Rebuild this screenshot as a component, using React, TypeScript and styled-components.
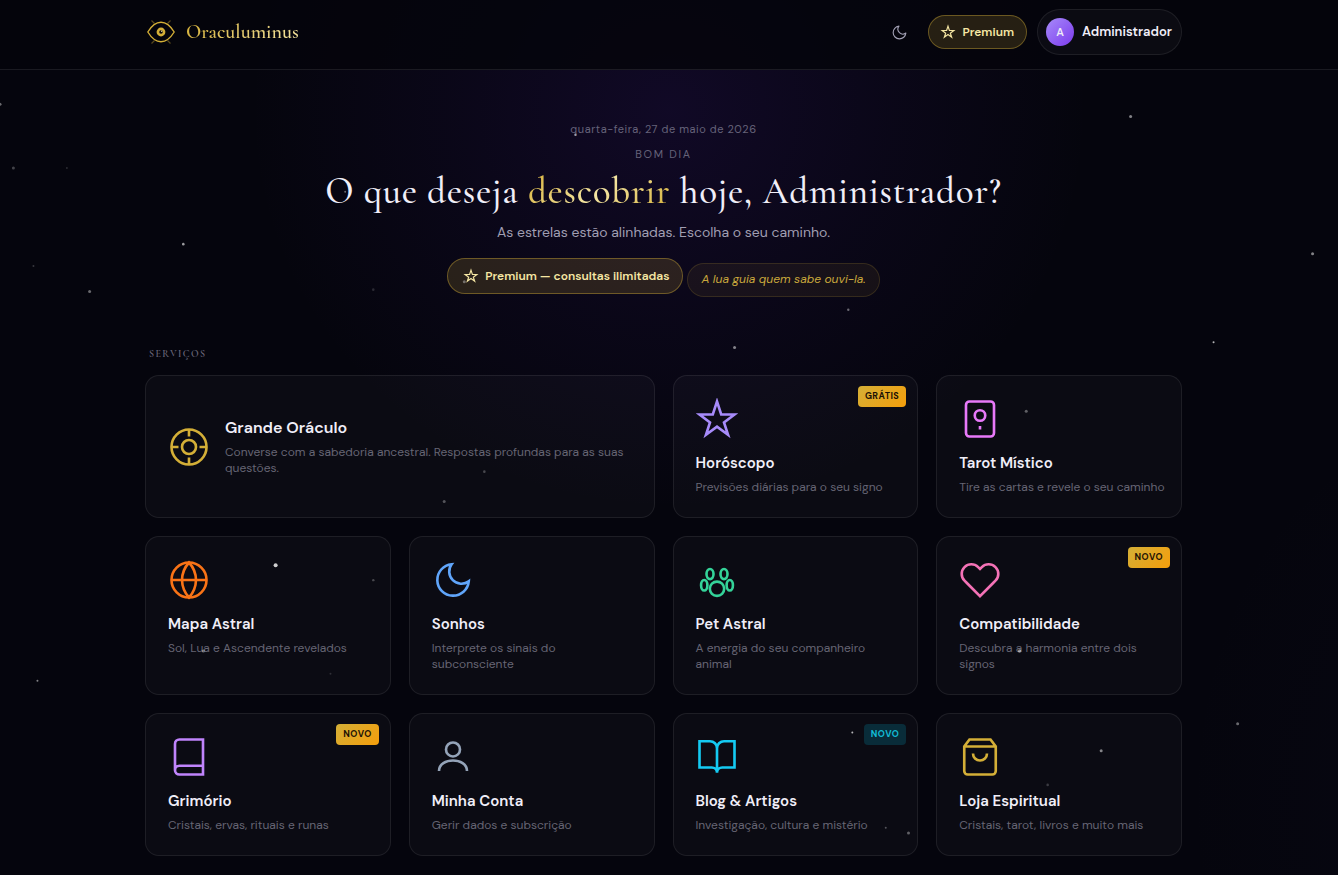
import React from "react";
import styled, { createGlobalStyle, css } from "styled-components";

const SANS = `"DM Sans", "Liberation Sans", Arial, sans-serif`;
const SERIF = `"Cormorant Garamond", "Liberation Serif", "Times New Roman", serif`;

const GlobalStyle = createGlobalStyle`
  *, *::before, *::after { box-sizing: border-box; }
  body {
    margin: 0;
    background: #05050d;
    color: #f0eef8;
    font-family: ${SANS};
    font-size: 12px;
    line-height: 16px;
  }
  h1, h2, h3, p { margin: 0; }
  a { color: inherit; text-decoration: none; }
  button { font: inherit; color: inherit; cursor: pointer; }
`;

const Page = styled.div`
  position: relative;
  min-height: 100vh;
  padding-bottom: 18px;
  background:
    radial-gradient(ellipse 420px 400px at 50% 110px, rgba(88, 34, 190, 0.14), rgba(88, 34, 190, 0.06) 55%, transparent),
    radial-gradient(ellipse 260px 380px at 108% 800px, rgba(60, 50, 130, 0.04), transparent);
`;

const StarLayer = styled.svg`
  position: fixed;
  inset: 0;
  width: 100%;
  height: 100vh;
  pointer-events: none;
  z-index: 2;
`;

const Container = styled.div`
  max-width: 1037px;
  margin: 0 auto;
`;

const Header = styled.header`
  padding: 9px 11px 14px 0;
  background: rgba(5, 5, 12, 0.86);
  border-bottom: 1px solid rgba(255, 255, 255, 0.09);
`;

const Main = styled.main`
  padding-right: 11px;
`;

const HeaderBar = styled(Container)`
  display: flex;
  align-items: center;
  justify-content: space-between;
`;

const Brand = styled.a`
  display: flex;
  align-items: center;
  gap: 9px;
`;

const BrandName = styled.span`
  font-family: ${SERIF};
  font-size: 20px;
  font-weight: 600;
  line-height: 24px;
  background: linear-gradient(135deg, #d4af37, #f5e6a3);
  background-clip: text;
  -webkit-background-clip: text;
  color: transparent;
`;

const Actions = styled.div`
  display: flex;
  align-items: center;
  gap: 10px;
`;

const ThemeButton = styled.button`
  display: grid;
  place-items: center;
  width: 38px;
  height: 38px;
  padding: 0;
  border: 0;
  border-radius: 50%;
  background: none;
  color: #a3a1b5;
`;

const premiumLook = css`
  display: inline-flex;
  align-items: center;
  gap: 7px;
  border: 1px solid rgba(212, 175, 55, 0.4);
  border-radius: 18px;
  background: rgba(212, 175, 55, 0.16);
  color: #f5e6a3;
  font-weight: 600;
`;

const PremiumLink = styled.a`
  ${premiumLook}
  height: 34px;
  padding: 0 12px;
`;

const PremiumStatus = styled.span`
  ${premiumLook}
  height: 36px;
  padding: 0 13px 0 16px;
`;

const AccountButton = styled.button`
  display: flex;
  align-items: center;
  gap: 8px;
  height: 46px;
  padding: 0 9px 0 8px;
  border: 1px solid rgba(255, 255, 255, 0.08);
  border-radius: 23px;
  background: rgba(255, 255, 255, 0.03);
  font-size: 13px;
  font-weight: 600;
`;

const Avatar = styled.span`
  display: grid;
  place-items: center;
  width: 28px;
  height: 28px;
  border-radius: 50%;
  background: linear-gradient(135deg, #a78bfa, #7c3aed);
  font-size: 11px;
`;

const Hero = styled.section`
  display: flex;
  flex-direction: column;
  align-items: center;
  padding-top: 51px;
  text-align: center;
`;

const DateLine = styled.p`
  color: #66637a;
  font-size: 11px;
  letter-spacing: 0.05em;
`;

const Greeting = styled.p`
  margin-top: 9px;
  color: #66637a;
  font-size: 11px;
  letter-spacing: 0.15em;
  text-transform: uppercase;
`;

const Headline = styled.h1`
  margin-top: 8px;
  font-family: ${SERIF};
  font-size: 37px;
  font-weight: 500;
  line-height: 44px;
  letter-spacing: 0.02em;
`;

const Accent = styled.span`
  background: linear-gradient(135deg, #d4af37, #f5e6a3 50%, #d4af37);
  background-clip: text;
  -webkit-background-clip: text;
  color: transparent;
`;

const Lead = styled.p`
  margin-top: 8px;
  color: #a09eb2;
  font-size: 14px;
  line-height: 20px;
`;

const Pills = styled.div`
  display: flex;
  flex-wrap: wrap;
  justify-content: center;
  align-items: flex-start;
  gap: 4px;
  margin-top: 16px;
`;

const Quote = styled.em`
  margin-top: 5px;
  padding: 7px 13px 9px;
  border: 1px solid rgba(212, 175, 55, 0.16);
  border-radius: 17px;
  background: rgba(212, 175, 55, 0.07);
  color: #c9a83c;
`;

const SectionLabel = styled.h2`
  margin: 49px 0 13px;
  padding-left: 4px;
  color: #6b687b;
  font-family: ${SERIF};
  font-size: 10px;
  font-weight: 600;
  line-height: 16px;
  letter-spacing: 0.14em;
  text-transform: uppercase;
`;

const Grid = styled.div`
  display: grid;
  grid-template-columns: repeat(4, minmax(0, 1fr));
  gap: 18px;

  @media (max-width: 900px) {
    grid-template-columns: repeat(2, minmax(0, 1fr));
  }
`;

const Card = styled.a<{ $featured?: boolean }>`
  position: relative;
  display: flex;
  flex-direction: column;
  gap: 13px;
  padding: 22px 14px 22px 22px;
  border: 1px solid rgba(255, 255, 255, 0.08);
  border-radius: 14px;
  background: rgba(255, 255, 255, 0.028);
  ${({ $featured }) =>
    $featured &&
    css`
      grid-column: span 2;
      flex-direction: row;
      align-items: center;
      gap: 15px;
    `}
`;

const CardIcon = styled.svg<{ $tone: string }>`
  flex: none;
  width: 42px;
  height: 42px;
  color: ${({ $tone }) => $tone};
`;

const CardTitle = styled.h3<{ $featured?: boolean }>`
  font-size: ${({ $featured }) => ($featured ? "16px" : "15px")};
  font-weight: 600;
  line-height: 20px;
`;

const CardText = styled.p`
  margin-top: 6px;
  color: #666573;
  white-space: pre-line;
`;

const Badge = styled.span<{ $cool?: boolean }>`
  position: absolute;
  top: 10px;
  right: 11px;
  padding: 2px 7px 3px;
  border-radius: 4px;
  font-size: 9px;
  font-weight: 700;
  letter-spacing: 0.05em;
  text-transform: uppercase;
  background: ${({ $cool }) =>
    $cool ? "rgba(6, 182, 212, 0.2)" : "linear-gradient(135deg, #d4af37, #f59e0b)"};
  color: ${({ $cool }) => ($cool ? "#12bdd6" : "#1a1005")};
`;

const STAR_PATH = "M12 2l2.4 7.4H22l-6 4.6 2.3 7-6.3-4.6L5.7 21 8 14 2 9.4h7.6z";
const MOON_PATH = "M21 12.79A9 9 0 1 1 11.21 3 7 7 0 0 0 21 12.79z";

const icons: Record<string, React.ReactNode> = {
  oracle: (
    <>
      <circle cx="12" cy="12" r="10" />
      <circle cx="12" cy="12" r="4" />
      <path d="M12 2v4M12 18v4M2 12h4M18 12h4" />
    </>
  ),
  star: <path d={STAR_PATH} />,
  tarot: (
    <>
      <rect x="4" y="2" width="16" height="20" rx="2" />
      <circle cx="12" cy="10" r="3" />
      <path d="M12 16v2" />
    </>
  ),
  globe: (
    <>
      <circle cx="12" cy="12" r="10" />
      <path d="M2 12h20M12 2a15.3 15.3 0 0 1 4 10 15.3 15.3 0 0 1-4 10 15.3 15.3 0 0 1-4-10 15.3 15.3 0 0 1 4-10z" />
    </>
  ),
  moon: <path d={MOON_PATH} />,
  paw: (
    <>
      <ellipse cx="8" cy="8.6" rx="2" ry="2.9" />
      <ellipse cx="16" cy="8.6" rx="2" ry="2.9" />
      <ellipse cx="4.7" cy="15" rx="1.8" ry="3" />
      <ellipse cx="19.3" cy="15" rx="1.8" ry="3" />
      <circle cx="12" cy="17" r="4.1" />
    </>
  ),
  heart: (
    <path d="M20.84 4.61a5.5 5.5 0 0 0-7.78 0L12 5.67l-1.06-1.06a5.5 5.5 0 0 0-7.78 7.78l1.06 1.06L12 21.23l7.78-7.78 1.06-1.06a5.5 5.5 0 0 0 0-7.78z" />
  ),
  book: (
    <path d="M4 19.5A2.5 2.5 0 0 1 6.5 17H20M6.5 2H20v20H6.5A2.5 2.5 0 0 1 4 19.5v-15A2.5 2.5 0 0 1 6.5 2z" />
  ),
  user: (
    <>
      <circle cx="12" cy="7.7" r="4" />
      <path d="M4 20c0-4 4-6 8-6s8 2 8 6" />
    </>
  ),
  openBook: (
    <path d="M2 3h6a4 4 0 0 1 4 4v14a3 3 0 0 0-3-3H2zM22 3h-6a4 4 0 0 0-4 4v14a3 3 0 0 1 3-3h7z" />
  ),
  bag: (
    <path d="M6 2L3 6v14a2 2 0 0 0 2 2h14a2 2 0 0 0 2-2V6l-3-4zM3 6h18M16 10a4 4 0 0 1-8 0" />
  ),
};

interface Service {
  title: string;
  text: string;
  icon: string;
  tone: string;
  featured?: boolean;
  badge?: string;
  coolBadge?: boolean;
}

const services: Service[] = [
  { title: "Grande Oráculo", text: "Converse com a sabedoria ancestral. Respostas profundas para as suas\nquestões.", icon: "oracle", tone: "#d4af37", featured: true },
  { title: "Horóscopo", text: "Previsões diárias para o seu signo", icon: "star", tone: "#a78bfa", badge: "Grátis" },
  { title: "Tarot Místico", text: "Tire as cartas e revele o seu caminho", icon: "tarot", tone: "#e879f9" },
  { title: "Mapa Astral", text: "Sol, Lua e Ascendente revelados", icon: "globe", tone: "#f97316" },
  { title: "Sonhos", text: "Interprete os sinais do\nsubconsciente", icon: "moon", tone: "#60a5fa" },
  { title: "Pet Astral", text: "A energia do seu companheiro\nanimal", icon: "paw", tone: "#34d399" },
  { title: "Compatibilidade", text: "Descubra a harmonia entre dois\nsignos", icon: "heart", tone: "#f472b6", badge: "Novo" },
  { title: "Grimório", text: "Cristais, ervas, rituais e runas", icon: "book", tone: "#c084fc", badge: "Novo" },
  { title: "Minha Conta", text: "Gerir dados e subscrição", icon: "user", tone: "#94a3b8" },
  { title: "Blog & Artigos", text: "Investigação, cultura e mistério", icon: "openBook", tone: "#14caf2", badge: "Novo", coolBadge: true },
  { title: "Loja Espiritual", text: "Cristais, tarot, livros e muito mais", icon: "bag", tone: "#d4af37" },
];

/* x and y in percent of the window, radius in pixels, opacity */
const stars: [number, number, number, number][] = [
  [0, 11.9, 1.5, 0.4], [1, 19.2, 1.5, 0.25], [5, 19.2, 1, 0.15], [13.7, 27.9, 1.3, 0.6],
  [2.5, 30.4, 1, 0.2], [6.7, 33.3, 1.5, 0.4], [27.9, 33.1, 1.3, 0.15], [25.8, 21.9, 1, 0.4],
  [43, 15.4, 1.2, 0.5], [34.7, 32.2, 1.5, 0.35], [84.5, 13.3, 1.5, 0.5], [98.1, 29, 1.5, 0.5],
  [63.4, 35.4, 1.2, 0.4], [54.9, 39.7, 1.5, 0.5], [90.7, 39.1, 1, 0.7], [33.2, 57.3, 1.5, 0.3],
  [36.2, 53.9, 1.3, 0.25], [76.7, 47, 1.5, 0.35], [20.6, 64.6, 2, 0.8], [27.9, 66.3, 1.2, 0.25],
  [15.2, 74.4, 1.5, 0.4], [24.7, 77, 1, 0.15], [76.2, 74.4, 1.7, 0.5], [2.8, 77.8, 1, 0.5],
  [92.5, 82.7, 1.5, 0.4], [63.7, 83.7, 1, 0.7], [82.3, 85.8, 1.5, 0.5], [78.3, 89.7, 1.3, 0.2],
  [66.2, 94.6, 1, 0.3], [67.9, 95.2, 1.5, 0.35],
];

const StarIcon = () => (
  <svg width="14" height="14" viewBox="0 0 24 24" fill="none" stroke="currentColor" strokeWidth="2" overflow="visible" aria-hidden="true">
    <path d={STAR_PATH} />
  </svg>
);

const EyeLogo = () => (
  <svg width="32" height="32" viewBox="0 0 32 32" fill="none" aria-hidden="true">
    <path d="M6.5 4.5l3 3M25.5 4.5l-3 3M6.5 27.5l3-3M25.5 27.5l-3-3" stroke="#d4af37" strokeWidth="1.2" opacity="0.4" />
    <path d="M2.8 16C6.5 10 11 6.3 16 6.3S25.5 10 29.2 16C25.5 22 21 25.7 16 25.7S6.5 22 2.8 16z" stroke="#d4af37" strokeWidth="1.4" strokeLinejoin="round" />
    <circle cx="16" cy="16" r="4.4" fill="#d4af37" />
    <circle cx="16" cy="16" r="1.8" fill="#0a0810" />
    <circle cx="16.7" cy="15.3" r="0.7" fill="#f5e6a3" />
  </svg>
);

export default function App() {
  return (
    <Page>
      <GlobalStyle />
      <StarLayer aria-hidden="true">
        {stars.map(([x, y, r, o], i) => (
          <circle key={i} cx={`${x}%`} cy={`${y}%`} r={r} fill="#ffffff" opacity={o} />
        ))}
      </StarLayer>

      <Header>
        <HeaderBar>
          <Brand href="#inicio">
            <EyeLogo />
            <BrandName>Oraculuminus</BrandName>
          </Brand>
          <Actions>
            <ThemeButton type="button" aria-label="Mudar tema">
              <svg width="17" height="17" viewBox="0 0 24 24" fill="none" stroke="currentColor" strokeWidth="1.6" strokeLinejoin="round">
                <path d={MOON_PATH} />
              </svg>
            </ThemeButton>
            <PremiumLink href="#premium">
              <StarIcon />
              Premium
            </PremiumLink>
            <AccountButton type="button">
              <Avatar>A</Avatar>
              Administrador
            </AccountButton>
          </Actions>
        </HeaderBar>
      </Header>

      <Main>
        <Container>
          <Hero>
            <DateLine>quarta-feira, 27 de maio de 2026</DateLine>
            <Greeting>Bom dia</Greeting>
            <Headline>
              O que deseja <Accent>descobrir</Accent> hoje, Administrador?
            </Headline>
            <Lead>As estrelas estão alinhadas. Escolha o seu caminho.</Lead>
            <Pills>
              <PremiumStatus>
                <StarIcon />
                Premium — consultas ilimitadas
              </PremiumStatus>
              <Quote>A lua guia quem sabe ouvi-la.</Quote>
            </Pills>
          </Hero>

          <SectionLabel>Serviços</SectionLabel>
          <Grid>
            {services.map((s) => (
              <Card key={s.title} href="#servico" $featured={s.featured}>
                <CardIcon $tone={s.tone} viewBox="0 0 24 24" fill="none" stroke="currentColor" strokeWidth="1.5" aria-hidden="true">
                  {icons[s.icon]}
                </CardIcon>
                <div>
                  <CardTitle $featured={s.featured}>{s.title}</CardTitle>
                  <CardText>{s.text}</CardText>
                </div>
                {s.badge && <Badge $cool={s.coolBadge}>{s.badge}</Badge>}
              </Card>
            ))}
          </Grid>
        </Container>
      </Main>
    </Page>
  );
}
